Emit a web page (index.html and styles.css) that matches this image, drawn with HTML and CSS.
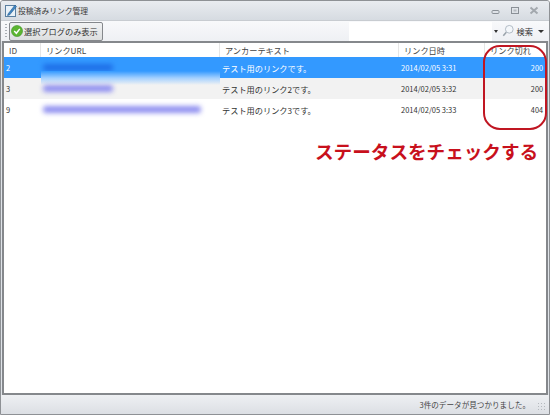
FILE: index.html
```html
<!DOCTYPE html>
<html lang="ja">
    <head>
        <meta charset="UTF-8" />
        <title>投稿済みリンク管理</title>
        <link rel="stylesheet" href="styles.css">
    </head>
    <body>
        <div class="window">
            <div class="titlebar">
                <svg class="appicon" width="12" height="13" viewBox="0 0 12 13">
                    <rect x="0.5" y="1.5" width="10" height="11" fill="#e8f1f8" stroke="#5a7fa0" />
                    <path d="M3 10 L10 1 L11.5 2.5 L4.5 11 L2.5 11.5 Z" fill="#3f86c4" stroke="#2b5f8e" stroke-width="0.6" />
                </svg>
                <span class="title">投稿済みリンク管理</span>
                <div class="winbtns">
                    <svg width="10" height="8" viewBox="0 0 10 8"><rect x="1" y="3.5" width="7" height="3" rx="1" fill="none" stroke="#8a9097" /></svg>
                    <svg width="10" height="9" viewBox="0 0 10 9"><rect x="1.5" y="1.5" width="7" height="6" fill="none" stroke="#8a9097" /><rect x="3.5" y="3.5" width="3" height="2" fill="#b5bac0" /></svg>
                    <svg width="10" height="9" viewBox="0 0 10 9"><path d="M1.5 1.5 L8.5 7.5 M8.5 1.5 L1.5 7.5" stroke="#a3a8ae" stroke-width="2" /></svg>
                </div>
            </div>

            <div class="toolbar">
                <div class="grip"></div>
                <button class="filter">
                    <svg width="12" height="12" viewBox="0 0 13 13">
                        <circle cx="6.5" cy="6.5" r="6" fill="#5cb531" stroke="#3d8f26" stroke-width="0.6" />
                        <path d="M3.5 6.5 L5.8 9 L9.5 4.2" fill="none" stroke="#fff" stroke-width="1.6" />
                    </svg>
                    選択ブログのみ表示
                </button>
                <div class="searchbox"></div>
                <span class="arrow small"></span>
                <svg class="lens" width="12" height="14" viewBox="0 0 14 15">
                    <circle cx="8.5" cy="5.5" r="4.5" fill="#f4f7fa" stroke="#a9b3bd" />
                    <path d="M5 9 L1.5 13" stroke="#9aa3ab" stroke-width="1.8" />
                </svg>
                <span class="searchlabel">検索</span>
                <span class="arrow"></span>
            </div>

            <div class="grid">
                <div class="row header">
                    <div class="c-id">ID</div>
                    <div class="c-url">リンクURL</div>
                    <div class="c-text">アンカーテキスト</div>
                    <div class="c-date">リンク日時</div>
                    <div class="c-status">リンク切れ</div>
                </div>
                <div class="row selected">
                    <div class="c-id">2</div>
                    <div class="c-url"><span class="blur dark w1"></span><span class="smear"></span></div>
                    <div class="c-text">テスト用のリンクです。</div>
                    <div class="c-date">2014/02/05 3:31</div>
                    <div class="c-status">200</div>
                </div>
                <div class="row alt">
                    <div class="c-id">3</div>
                    <div class="c-url"><span class="blur w1"></span></div>
                    <div class="c-text">テスト用のリンク2です。</div>
                    <div class="c-date">2014/02/05 3:32</div>
                    <div class="c-status">200</div>
                </div>
                <div class="row">
                    <div class="c-id">9</div>
                    <div class="c-url"><span class="blur w2"></span></div>
                    <div class="c-text">テスト用のリンク3です。</div>
                    <div class="c-date">2014/02/05 3:33</div>
                    <div class="c-status">404</div>
                </div>
            </div>

            <div class="statusbar">
                <span>3件のデータが見つかりました。</span>
                <div class="resize"></div>
            </div>

            <div class="callout"></div>
            <div class="note">ステータスをチェックする</div>
        </div>
    </body>
</html>
```

FILE: styles.css
```css
* {
    box-sizing: border-box;
}

html,
body {
    margin: 0;
    background: #fff;
}

.window {
    position: relative;
    width: 550px;
    height: 415px;
    display: flex;
    flex-direction: column;
    background: #dfe3e8;
    border: 1px solid #8e9195;
    border-radius: 3px 3px 0 0;
    font-family: "Noto Sans CJK JP", "Liberation Sans", sans-serif;
    font-size: 8.2px;
    color: #333;
    overflow: hidden;
}

.titlebar {
    height: 19px;
    flex: none;
    display: flex;
    align-items: center;
    padding: 0 5px 0 4px;
    gap: 1px;
    background: linear-gradient(#e9ecf0, #d6dbe1);
}

.title {
    font-size: 7.8px;
    color: #3c3c3c;
}

.winbtns {
    margin-left: auto;
    display: flex;
    align-items: center;
    gap: 9px;
    padding-right: 5px;
}

.toolbar {
    height: 21px;
    flex: none;
    display: flex;
    align-items: center;
    padding: 0 5px 0 4px;
    background: linear-gradient(#f8f9fb, #eef0f4);
    border-top: 1px solid #c8ccd1;
}

.grip {
    width: 2px;
    height: 15px;
    margin-right: 2px;
    background: repeating-linear-gradient(#a8adb3 0 1px, transparent 1px 3px);
}

.filter {
    height: 19px;
    width: 94px;
    padding: 0 0 0 1px;
    display: flex;
    align-items: center;
    gap: 1px;
    font: inherit;
    color: #333;
    white-space: nowrap;
    background: linear-gradient(#f1f2f3, #dcdedf);
    border: 1px solid #85888c;
    border-radius: 2px;
}

.filter svg {
    flex: none;
}

.searchbox {
    width: 143px;
    height: 19px;
    margin-left: auto;
    background: #fff;
}

.arrow {
    width: 0;
    height: 0;
    border: 3px solid transparent;
    border-top: 3px solid #333;
    border-bottom: 0;
}

.arrow.small {
    border-width: 3px 2px 0;
    margin: 0 4px 0 2px;
}

.lens {
    margin-right: 3px;
}

.searchlabel {
    margin-right: 5px;
    font-size: 8.2px;
}

.grid {
    flex: 1;
    display: flex;
    flex-direction: column;
    margin: 0 1px;
    background: #fff;
    border: 2px solid #85888c;
}

.row {
    display: grid;
    grid-template-columns: 37px 179px 179px 86px 1fr;
    align-items: center;
    height: 21px;
    flex: none;
}

.row > div {
    padding-left: 2px;
    white-space: nowrap;
}

.row > .c-url {
    position: relative;
    align-self: stretch;
    display: flex;
    align-items: center;
}

.row.header {
    height: 14px;
    color: #444;
    font-size: 8.2px;
    background: #fff;
}

.row.header > div {
    height: 14px;
    padding-left: 5px;
    line-height: 14px;
    font-size: 8.2px;
    border-right: 1px solid #e6e6e6;
}

.selected {
    background: #3399ff;
    color: #fff;
}

.alt {
    background: #f2f2f2;
}

.c-id {
    font-size: 7.5px;
}

.c-date {
    font-size: 7.5px;
}

.row .c-status {
    padding: 0 3px 0 0;
    text-align: right;
    font-size: 7.3px;
}

.row.header .c-status {
    text-align: left;
    border-right: 0;
}

.blur {
    display: block;
    height: 7px;
    background: #8f8ff0;
    filter: blur(2.5px);
    border-radius: 3px;
}

.blur.dark {
    background: #1f6fe8;
}

/* the blue of the selected row bleeds into the row below under the blurred url */
.smear {
    position: absolute;
    left: 0;
    right: 0;
    top: 14px;
    height: 14px;
    background: linear-gradient(#3399ff, #a3d0ff 50%, #f2f2f2);
}

.w1 {
    width: 70px;
}

.w2 {
    width: 158px;
}

.statusbar {
    height: 19px;
    flex: none;
    display: flex;
    align-items: center;
    justify-content: flex-end;
    padding-right: 3px;
    font-size: 7.6px;
    color: #444;
    background: linear-gradient(#eef0f3, #dcdfe4);
}

.resize {
    width: 9px;
    height: 9px;
    margin: 4px 0 0 7px;
    background: radial-gradient(circle, #b5b9be 1px, transparent 1px) 0 0 / 3px 3px;
}

.callout {
    position: absolute;
    left: 482px;
    top: 44px;
    width: 64px;
    height: 85px;
    border: 2px solid #c01622;
    border-radius: 17px;
}

.note {
    position: absolute;
    left: 314px;
    top: 136px;
    font-size: 18.6px;
    font-weight: 700;
    line-height: 28px;
    color: #c8101c;
    white-space: nowrap;
}
```
